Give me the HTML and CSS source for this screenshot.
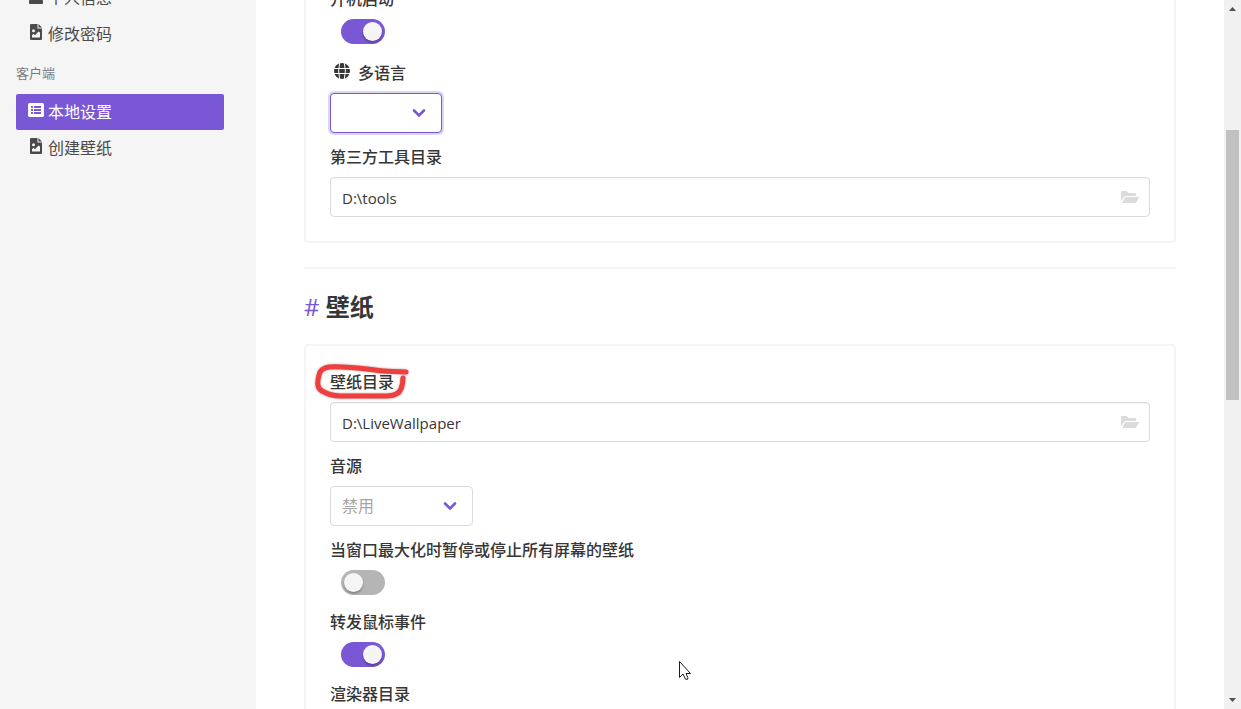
FILE: index.html
```html
<!DOCTYPE html>
<html lang="zh-CN">
<head>
<meta charset="utf-8">
<title>本地设置</title>
<link rel="stylesheet" href="styles.css">
</head>
<body>
<svg class="sprite" aria-hidden="true">
  <symbol id="file-image" viewBox="0 0 12 16"><path fill-rule="evenodd" d="M1 0h6.500v4.500H12V15a1 1 0 0 1-1 1H1a1 1 0 0 1-1-1V1a1 1 0 0 1 1-1zM8.500 0L12 3.500H8.500zM3.500 5.200a1.500 1.500 0 1 0 0 3 1.500 1.500 0 0 0 0-3zM2 13.500h8V8.500L8.500 7.500 5 11.200 3.500 9.700 2 11.200z"/></symbol>
  <symbol id="folder-open" viewBox="0 0 18 12"><path d="M0 10V1.200Q0 0 1.200 0H5.500L7.500 2H13.800Q15 2 15 3.200V5H5Q3.800 5 3.200 6zM1 12L4 6.500Q4.400 6 5 6H17.500Q18.300 6 17.900 6.700L15.300 11.300Q14.900 12 14 12z"/></symbol>
  <symbol id="chevron" viewBox="0 0 14 10"><path d="M2 2.500L7 7.500L12 2.500" fill="none" stroke="currentColor" stroke-width="2.600" stroke-linecap="round"/></symbol>
</svg>
<div class="layout">
  <nav class="sidebar">
    <div class="scrolled">
      <ul class="menu">
        <li><a class="menu-link" href="#profile"><svg class="menu-icon" viewBox="0 0 16 16"><path d="M8 0a4 4 0 1 1 0 8 4 4 0 0 1 0-8zM1 14q0-5 5-5h4q5 0 5 5v1q0 1-1 1H2q-1 0-1-1z"/></svg>个人信息</a></li>
        <li><a class="menu-link" href="#password"><svg class="menu-icon"><use href="#file-image"/></svg>修改密码</a></li>
      </ul>
      <p class="menu-label">客户端</p>
      <ul class="menu">
        <li><a class="menu-link active" href="#settings"><svg class="menu-icon" viewBox="0 0 16 16"><path fill-rule="evenodd" d="M1.500 1h13Q16 1 16 2.500v11Q16 15 14.500 15h-13Q0 15 0 13.500v-11Q0 1 1.500 1zM3 4v2h2V4zm3 0v2h7V4zM3 7v2h2V7zm3 0v2h7V7zM3 10v2h2v-2zm3 0v2h7v-2z"/></svg>本地设置</a></li>
        <li><a class="menu-link" href="#create"><svg class="menu-icon"><use href="#file-image"/></svg>创建壁纸</a></li>
      </ul>
    </div>
  </nav>
  <main class="content">
    <div class="scrolled">
      <section class="card">
        <div class="field">
          <label class="label" for="autostart">开机启动</label>
          <div class="switch-row"><input class="switch" type="checkbox" id="autostart" checked></div>
        </div>
        <div class="field">
          <label class="label with-icon" for="language"><svg class="globe" viewBox="0 0 16 16"><circle cx="8" cy="8" r="8"/><path d="M0 5.500h16M0 10.500h16M5.700 0Q3.500 8 5.700 16M10.300 0Q12.500 8 10.300 16"/></svg>多语言</label>
          <div class="select narrow focused"><select id="language"><option></option></select><svg class="chevron"><use href="#chevron"/></svg></div>
        </div>
        <div class="field">
          <label class="label" for="tools">第三方工具目录</label>
          <div class="path-box"><input type="text" id="tools" value="D:\tools"><button type="button" aria-label="选择目录"><svg><use href="#folder-open"/></svg></button></div>
        </div>
      </section>
      <hr class="divider">
      <h2 class="heading"><a href="#wallpaper">#</a> 壁纸</h2>
      <section class="card" id="wallpaper">
        <div class="field">
          <label class="label marked" for="wallpapers">壁纸目录<svg class="mark" viewBox="0 0 96 40"><path d="M91 10C79 9 71 10 60 8C43 6 28 4 14 5C8 6 5 8 4 13C2 21 2 26 7 29C14 33 20 34 25 34H72C80 34 84 32 86 27C88 22 88 19 88 16"/></svg></label>
          <div class="path-box"><input type="text" id="wallpapers" value="D:\LiveWallpaper"><button type="button" aria-label="选择目录"><svg><use href="#folder-open"/></svg></button></div>
        </div>
        <div class="field">
          <label class="label" for="audio">音源</label>
          <div class="select medium"><select id="audio"><option>禁用</option></select><svg class="chevron"><use href="#chevron"/></svg></div>
        </div>
        <div class="field">
          <label class="label" for="pause">当窗口最大化时暂停或停止所有屏幕的壁纸</label>
          <div class="switch-row"><input class="switch" type="checkbox" id="pause"></div>
        </div>
        <div class="field">
          <label class="label" for="mouse">转发鼠标事件</label>
          <div class="switch-row"><input class="switch" type="checkbox" id="mouse" checked></div>
        </div>
        <div class="field">
          <label class="label" for="renderer">渲染器目录</label>
          <div class="path-box"><input type="text" id="renderer"><button type="button" aria-label="选择目录"><svg><use href="#folder-open"/></svg></button></div>
        </div>
      </section>
    </div>
  </main>
  <div class="scrollbar" aria-hidden="true">
    <svg viewBox="0 0 17 17"><path d="M5 11h7L8.500 7z"/></svg>
    <div class="track"><div class="thumb"></div></div>
    <svg viewBox="0 0 17 17"><path d="M5 6h7L8.500 10z"/></svg>
  </div>
</div>
<svg class="cursor" viewBox="0 0 14 20"><path d="M1.500 1.500V17.500L5 14L7.500 19.200H9.800V17.500L8 13.500H12.500z"/></svg>
</body>
</html>
```
FILE: styles.css
```css
* { box-sizing: border-box; }

:root {
  --primary: #7957d5;
  --border: #dbdbdb;
  --soft: #f5f5f5;
  --ink: #363636;
}

body {
  margin: 0;
  height: 100vh;
  overflow: hidden;
  background: #fff;
  color: #4a4a4a;
  font: 16px/24px "Open Sans", "Noto Sans CJK SC", sans-serif;
}

.sprite { display: none; }
svg { display: block; fill: currentColor; }

.layout {
  display: grid;
  grid-template-columns: 256px 1fr 17px;
  height: 100vh;
}

.sidebar {
  padding: 0 32px 0 16px;
  background: var(--soft);
  overflow: hidden;
}
.sidebar .scrolled { margin-top: -20px; }

.menu { margin: 0; padding: 0; list-style: none; }
.menu-link {
  display: flex;
  gap: 4px;
  padding: 6px 12px;
  border-radius: 2px;
  color: #4a4a4a;
  text-decoration: none;
}
.menu-link.active { background: var(--primary); color: #fff; }
.menu-icon { width: 16px; height: 16px; margin-top: 2px; }

.menu-label {
  margin: 0;
  padding: 11px 0;
  color: #7a7a7a;
  font-size: 13px;
  line-height: 20px;
}

.content { overflow: hidden; padding: 0 48px; }
.content .scrolled { margin-top: -39px; }

.card {
  display: flex;
  flex-direction: column;
  gap: 12px;
  padding: 24px;
  border: 2px solid var(--soft);
  border-radius: 4px;
}

.label {
  display: block;
  width: fit-content;
  margin-bottom: 8px;
  color: var(--ink);
  font-weight: 500;
}
.with-icon { display: flex; gap: 8px; padding: 2px 0 0 4px; }
.globe { width: 16px; height: 16px; margin-top: 2px; }
.globe path { fill: none; stroke: #fff; stroke-width: 1; }

.switch-row { display: flex; height: 28px; padding-left: 11px; }
.switch {
  appearance: none;
  width: 44px;
  height: 25px;
  margin: 0;
  padding: 3px;
  border-radius: 13px;
  background: #b5b5b5;
}
.switch::before {
  content: "";
  display: block;
  width: 19px;
  height: 19px;
  border-radius: 50%;
  background: var(--soft);
  box-shadow: 0 2px 2px rgba(0, 0, 0, .25);
}
.switch:checked { background: var(--primary); }
.switch:checked::before { margin-left: auto; }

.select { display: grid; height: 40px; align-items: center; }
.select > * { grid-area: 1 / 1; }
.narrow { width: 112px; }
.medium { width: 143px; }
.select select {
  appearance: none;
  width: 100%;
  height: 40px;
  padding: 0 40px 0 11px;
  border: 1px solid var(--border);
  border-radius: 4px;
  background: #fff;
  color: #a5a5a5;
  font: inherit;
}
.focused select {
  border-color: var(--primary);
  box-shadow: 0 0 0 2px rgba(121, 87, 213, .25);
}
.chevron {
  width: 14px;
  height: 10px;
  margin-right: 16px;
  justify-self: end;
  color: var(--primary);
  pointer-events: none;
}

.path-box {
  display: flex;
  align-items: center;
  height: 40px;
  padding: 0 10px 0 11px;
  border: 1px solid var(--border);
  border-radius: 4px;
  box-shadow: inset 0 1px 2px rgba(10, 10, 10, .05);
}
.path-box input {
  flex: 1;
  min-width: 0;
  padding: 1px 0 0;
  border: 0;
  outline: 0;
  background: none;
  color: var(--ink);
  font: inherit;
  font-size: 15px;
}
.path-box button {
  padding: 0;
  border: 0;
  background: none;
  color: var(--border);
}
.path-box button svg { width: 18px; height: 12px; }

.divider {
  height: 2px;
  margin: 24px 0;
  border: 0;
  background: var(--soft);
}
.heading {
  margin: 0 0 24px;
  color: var(--ink);
  font-size: 24px;
  line-height: 27px;
}
.heading a { color: var(--primary); font-weight: 400; text-decoration: none; }

.marked { position: relative; }
.mark {
  position: absolute;
  left: -15px;
  top: -8px;
  width: 96px;
  height: 40px;
  fill: none;
  stroke: #f03e3e;
  stroke-width: 5;
  stroke-linecap: round;
  stroke-linejoin: round;
  filter: drop-shadow(0 0 1px rgba(60, 0, 0, .4));
}

.scrollbar {
  display: grid;
  grid-template-rows: 17px 1fr 17px;
  background: #f1f1f1;
  color: #505050;
}
.track {
  display: grid;
  grid-template-rows: 113fr 270fr 292fr;
  padding: 0 2px;
}
.thumb { grid-row: 2; background: #c1c1c1; }

.cursor {
  position: absolute;
  left: 678px;
  top: 660px;
  width: 14px;
  height: 20px;
  fill: #fff;
  stroke: #1a1a24;
  stroke-width: 1;
}
```
